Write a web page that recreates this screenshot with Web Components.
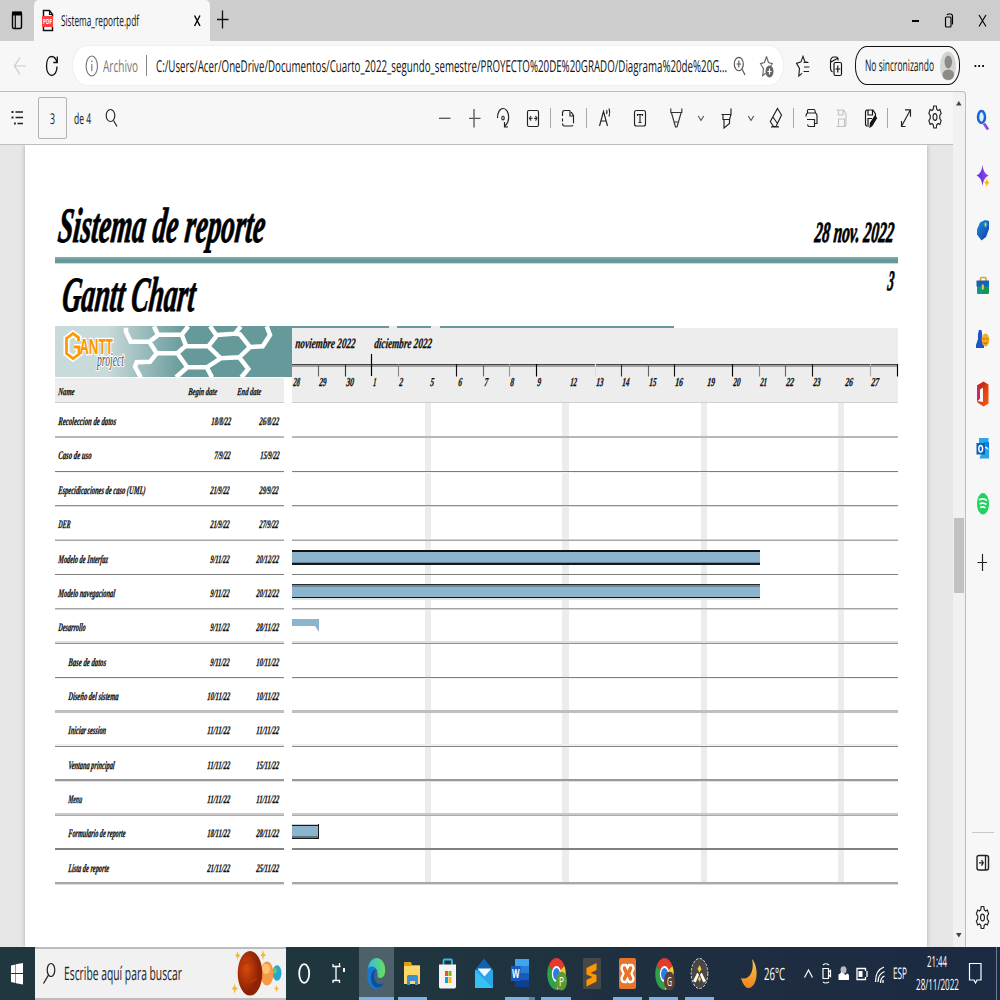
<!DOCTYPE html>
<html lang="es">
<head>
<meta charset="utf-8">
<title>Sistema_reporte.pdf</title>
<style>
html,body{margin:0;height:1000px;overflow:hidden}
body{display:flex;flex-direction:column;width:1000px;background:#f7f7f7;font-family:"Open Sans","Noto Sans",sans-serif}
main{display:flex;height:856px}
section{display:flex;flex-direction:column;width:953px;border-top:1px solid #bdbdbd;box-sizing:border-box}
</style>
</head>
<body>
<tab-strip></tab-strip>
<address-bar></address-bar>
<main>
  <section>
    <pdf-toolbar></pdf-toolbar>
    <pdf-view><gantt-report></gantt-report></pdf-view>
  </section>
  <scroll-rail></scroll-rail>
  <side-rail></side-rail>
</main>
<task-bar></task-bar>
<script>
/* One line of narrow, tall text: "label" set at "size" px and condensed to "w" px.
   "slant" adds an oblique angle, pivoting on the baseline; "k" is the offset of the
   baseline from the middle of the line, in ems. */
class FitText extends HTMLElement{
  connectedCallback(){
    if(this.shadowRoot)return;
    const at=(n,d)=>+(this.getAttribute(n)??d);
    const s=at('size',14),a=at('slant',0),k=at('k',.388),full=at('w',10);
    const w=full-.6*s*Math.tan(a*Math.PI/180),h=Math.round(s*1.4);
    this.attachShadow({mode:'open'}).innerHTML=`<style>:host{display:block;flex:none;width:${full}px;height:${h}px}
      svg{display:block;overflow:visible}
      text{font-size:${s}px;fill:currentColor;stroke:currentColor;stroke-width:var(--weight,0);text-rendering:geometricPrecision}</style>
      <svg width="${full}" height="${h}"><text></text></svg>`;
    const t=this.shadowRoot.querySelector('text');
    t.textContent=this.getAttribute('label');
    const n=t.getComputedTextLength()||w;
    t.setAttribute('transform',`translate(0 ${(h/2+k*s).toFixed(2)}) skewX(${-a}) scale(${(w/n).toFixed(5)} 1)`);
  }
}
customElements.define('fit-text',FitText);

/* Item makers: drawings use window coordinates for their viewBox. */
const I=(x,y,w,h,body,extra='')=>({x,y,w,h,html:m=>`<svg style="${m};${extra}" width="${w}" height="${h}" viewBox="${x} ${y} ${w} ${h}">${body}</svg>`});
const T=(x,base,w,size,text,style='',k=.388,slant=0)=>{
  const h=Math.round(size*1.4);
  return {x,y:base-h/2-k*size,w,h,html:m=>`<fit-text w="${w}" size="${size}" slant="${slant}" k="${k}" label="${text}" style="${m};${style}"></fit-text>`};
};
const S=(x,y,h,c='#a8a8a8')=>({x,y,w:1,h,html:m=>`<i style="${m};width:1px;height:${h}px;background:${c}"></i>`});
const flow=(items,x0,y0)=>{let c=x0;return items.map(i=>{const r=i.html(`margin:${(i.y-y0).toFixed(2)}px 0 0 ${(i.x-c).toFixed(2)}px`);c=i.x+i.w;return r}).join('')};
const flowDown=(items,x0,y0)=>{let c=y0;return items.map(i=>{const r=i.html(`margin:${i.y-c}px 0 0 ${i.x-x0}px`);c=i.y+i.h;return r}).join('')};
const BASE=`svg,i{display:block;flex:none}svg{overflow:visible;fill:none;stroke:#222;stroke-width:1.15}`;
const define=(name,css,html)=>customElements.define(name,class extends HTMLElement{
  connectedCallback(){if(!this.shadowRoot)this.attachShadow({mode:'open'}).innerHTML=`<style>${BASE}${css}</style>${html}`}
});

const gear=(cx,cy)=>`<g transform="translate(${cx} ${cy}) scale(.58 1)"><path vector-effect="non-scaling-stroke" d="M-2.2-11h4.4l.8 3.2 2.3 1.3 3.1-1 2.2 3.8-2.4 2.2v3l2.4 2.2-2.2 3.8-3.1-1-2.3 1.3-.8 3.2h-4.4l-.8-3.2-2.3-1.3-3.1 1-2.2-3.8 2.4-2.2v-3l-2.4-2.2 2.2-3.8 3.1 1 2.3-1.3z"/><circle vector-effect="non-scaling-stroke" r="3.4"/></g>`;

/* ---------- tabs ---------- */
define('tab-strip',`:host{display:flex;height:41px;background:#cdcdcd;align-items:flex-start}
 .tab{display:flex;align-items:flex-start;width:176px;height:41px;background:#f7f7f7;border-radius:5px 5px 0 0;margin-left:11px}`,
 flow([I(11,11,12,18,`<rect x="12.5" y="12.5" width="9" height="16" rx="1.5" stroke="#000" stroke-width="1.4"/><path d="M12 11.500h10v4h-10z" fill="#000" stroke="none"/><path d="M15.300 15v13" stroke="#000"/>`)],0,0)+
 `<div class="tab">`+flow([
  I(41,9,13,23,`<path d="M43.500 16v-5.500h6l3 4V17M43.500 27v3.500h9V27" fill="#fff" stroke="#111" stroke-width="1.500"/><path d="M49.500 10.500v4h3" stroke="#111"/><rect x="42" y="16" width="11" height="11" fill="#fb4141" stroke="none"/><text x="43" y="24.300" font-size="7" textLength="9" lengthAdjust="spacingAndGlyphs" fill="#fff" stroke="none" font-weight="700" font-family="Open Sans">PDF</text>`),
  T(61,26,78,15,'Sistema_reporte.pdf','color:#111'),
  I(193,14,8,13,`<path d="M194.500 15.500l5.500 10.500M200 15.500l-5.500 10.500" stroke="#000" stroke-width="1.400"/>`)],34,0)+`</div>`+
 flow([I(216,10,13,20,`<path d="M217 19.500h11.500M222.500 10.500v18" stroke="#111" stroke-width="1.300"/>`),
  I(911,18,9,6,`<path d="M912 21h7" stroke="#000" stroke-width="2"/>`),
  I(944,13,10,15,`<rect x="945.500" y="17" width="5.500" height="10" rx="1" stroke="#000"/><path d="M947 15q.5-1 2-1h1.500q2 0 2 2.500v8" stroke="#000"/>`),
  I(978,14,9,13,`<path d="M979 15l7 11.500M986 15l-7 11.500" stroke="#000"/>`)],210,0));

/* ---------- address row ---------- */
const star=`<path d="M766.500 56.500l2 6 3.800 1.200-2.600 4.300M766.500 56.500l-2 6-4 1.200 3 5-.8 7 3-2.500"/>`;
define('address-bar',`:host{display:flex;height:50px;align-items:flex-start;background:#f7f7f7}
 .pill{display:flex;align-items:flex-start;width:710px;height:39px;margin:5px 0 0 15px;background:#fff;border-radius:14px/20px;box-shadow:0 0 2px #ddd}
 .me{display:flex;align-items:flex-start;box-sizing:border-box;width:105px;height:39px;margin:5px 0 0 12px;border:1px solid #111;border-width:1.5px 1px;border-radius:12px/18px}`,
 flow([I(13,57,14,18,`<path d="M14.500 66h11.500M20 57.500l-5.500 8.500 5.500 8.500" stroke="#c9c9c9"/>`),
  I(45,55,13,22,`<path d="M57 62.500c-1-4-3-6-5.500-6-3 0-5 4-5 9.500s2.200 9.500 5.200 9.500c3 0 5.300-4 5.300-9M57.300 56.500v6h-4" stroke="#111" stroke-width="1.300"/>`)],0,41)+
 `<div class="pill">`+flow([
  I(85,55,14,22,`<ellipse cx="91.800" cy="66" rx="5.700" ry="10" stroke="#777"/><path d="M91.800 64v7M91.800 60.500v1.800" stroke="#777"/>`),
  T(103,71.800,35,16.500,'Archivo','color:#777'),S(146,55,21,'#888'),
  T(156,71.800,571,16.500,'C:/Users/Acer/OneDrive/Documentos/Cuarto_2022_segundo_semestre/PROYECTO%20DE%20GRADO/Diagrama%20de%20G...','color:#111'),
  I(734,56,12,20,`<ellipse cx="738.800" cy="64" rx="4.500" ry="6.700" stroke="#555"/><path d="M742 69l3 6M736.500 64h4.600M738.800 60.500v7" stroke="#555"/>`),
  I(759,55,15,24,`<g stroke="#666">${star}</g><ellipse cx="769.500" cy="71.500" rx="4" ry="6" fill="#666" stroke="none"/><path d="M767.500 71.500h4M769.500 68.500v6" stroke="#fff"/>`)],73,46)+`</div>`+
 flow([
  I(796,55,14,22,`<path d="M808.500 62.500l-3.500-.6-2-5.500-2 5.500-4.500 1.500 3 5-.7 7.500 3.200-2.500M804 67h5.500M803.500 71.500h5.500M803.500 62.500h5" stroke="#222"/>`),
  I(829,55,14,22,`<rect x="834" y="62.500" width="7.500" height="13" rx="1.500" stroke="#111"/><path d="M837.800 65.500v7M835.500 69h4.800M838 60.500v-2q-.5-1.500-1.500-1.500h-2.500q-3.500 0-3.500 5v6q0 3 2 4M831 62l7-4" stroke="#111"/>`)],783,41)+
 `<div class="me">`+flow([T(865,71.200,69,16,'No sincronizando','color:#111'),
  I(940,52,16,29,`<g stroke="none"><ellipse cx="948" cy="66" rx="8" ry="14.500" fill="#d5d4d0"/><ellipse cx="948.300" cy="62" rx="3.800" ry="6.500" fill="#8e8a85"/><ellipse cx="948.300" cy="74.800" rx="5.800" ry="5.300" fill="#8e8a85"/></g>`)],856,47)+`</div>`+
 flow([I(973,64,12,4,`<path d="M974.500 66h1.800M978.300 66h1.800M982.200 66h1.800" stroke="#111" stroke-width="2"/>`)],960,41));

/* ---------- PDF toolbar ---------- */
const chev=x=>I(x,115,6,7,`<path d="M${x+.3} 116l2.700 4.500 2.700-4.500" stroke="#555"/>`);
define('pdf-toolbar',`:host{display:flex;align-items:flex-start;flex:none;height:53px;box-sizing:border-box;background:#f7f7f7;border-bottom:1px solid #bdbdbd}
 .box{display:flex;align-items:flex-start;box-sizing:border-box;width:29px;height:42px;margin:5px 0 0 14px;border:1px solid #b3b3b3;border-radius:2px}`,
 flow([I(11,109,13,17,`<path d="M15.500 112h7.500M15.500 117.500h7.500M17.500 123.500h5.500" stroke="#222" stroke-width="1.400"/><path d="M11.500 112h2M11.500 117.500h2M14 123.500h1.800" stroke="#222" stroke-width="1.800"/>`)],0,92)+
 `<div class="box">`+flow([T(49.800,124.5,5,15,'3','color:#111')],39,98)+`</div>`+
 flow([T(74,124.5,17,15,'de 4','color:#111'),
 I(105,108,13,20,`<ellipse cx="110.500" cy="115.500" rx="4.300" ry="6"/><path d="M113.500 120.500l3.500 6"/>`),
 I(438,116,13,4,`<path d="M439 118.300h11.500" stroke="#555" stroke-width="1.300"/>`),
 I(468,108,13,20,`<path d="M469 118.300h11.500M474 109v18.500" stroke="#555" stroke-width="1.300"/>`),
 I(496,107,14,21,`<path d="M497.500 118c0-5 2-9.500 5.500-9.500s5.700 4 5.700 9c0 4-1.700 6.500-3.500 8.500M504.500 122v5h3.500"/><ellipse cx="503" cy="118" rx="1.200" ry="2"/>`),
 I(527,109,12,19,`<rect x="527.500" y="110.500" width="11" height="16" rx="1.500"/><path d="M529.500 118.300h3M534 118.300h3M531 116l-1.500 2.300 1.500 2.300M535.500 116l1.500 2.300-1.500 2.300" stroke="#333"/>`),
 S(550,108,20),
 I(561,109,14,18,`<path d="M562.500 116v-3q0-2.500 2-2.500h5.500l3.500 5v8.500q0 2-2 2h-7q-2 0-2-2.500v-5M570 110.500v5.500h3.500" stroke-dasharray="12 2"/>`),
 S(586,108,20),
 I(599,108,12,19,`<path d="M599.500 126l4-14.500 4 14.500M601 121h5M606.500 110q1 1.500 0 4M609 108.500q1.500 4 0 8" stroke="#222"/>`),
 I(634,110,12,17,`<rect x="634.500" y="110.500" width="11" height="15.500" rx="2"/><path d="M637.500 116v-1.500h5V116M640 114.500v8M638.500 122.500h3"/>`),
 I(670,107,13,21,`<path d="M670.800 108.500v4h11v-4M671.500 113l4 14h1.500l4-14M674.300 122h4" stroke="#333"/>`),chev(698),
 I(721,108,11,21,`<path d="M721.500 114.500h9M723 114.500v5h6.500M731 108.500v6l-1.500 5v4l-5.500 4.500v-8" stroke="#222"/>`),chev(748),
 I(769,107,14,21,`<path d="M777.500 108.500l4 6.500-5.500 11.500h-2.500l-3.200-5zM772.500 116.500l5 7M771 126.800h8"/>`),
 S(793,108,20),
 I(805,108,13,20,`<path d="M807.500 113v-2.500q0-1 1-1h5.500q1 0 1.500 3.500M806 116.500q0-3.500 2-3.500h7q2 0 2 3v7.500h-2M807 119.500h7.500v7h-5.500q-1 0-1.500-2"/>`),
 I(835,108,12,20,`<path d="M836.500 110h7l2.500 4v10q0 2.500-2 2.500h-7.500M838.500 110v5h4.500v-5M838.500 126v-7h6v7" stroke="#c4c4c4"/>`),
 I(865,108,12,20,`<path d="M869 126h-2q-1.500 0-1.500-2.500v-11q0-2.500 1.500-2.500h6l2.500 4v2M868 110v5h4.500v-5M868 125v-6.500h4" stroke="#111"/><path d="M870 127l.5-4 4.500-7 1.500 2-4.500 7.500z" fill="#111" stroke="#111"/>`),
 S(887,108,20),
 I(900,108,12,20,`<path d="M905 109.800h5.500v7M910.500 109.800l-9 16.500M901.500 121v5.500h4" stroke="#222"/>`),
 I(928,105,14,24,gear(935,117))],67,92));

/* ---------- page surface ---------- */
define('pdf-view',`:host{display:flex;flex:1;background:#e6e6e6;overflow:hidden}
 .page{display:flex;flex-direction:column;width:902px;margin-left:25px;background:#fff;box-shadow:0 0 4px #aaa}`,`<div class="page"><slot></slot></div>`);

/* ---------- gantt report ---------- */
const tx=(x,b,w,s,t,st='color:#0c0c0c;--weight:.25px')=>T(x,b,w,s,t,st,.3375,6);
const BIG='color:#000;--weight:.9px';
const rows=[
 [58,58.5,'Recoleccion de datos',210.5,20.5,'18/8/22',259,20.5,'26/8/22',436,['#b8b8b8','#b8b8b8','#fff']],
 [58,34,'Caso de uso',214,17,'7/9/22',260,20,'15/9/22',471,['#7d7d7d','#f4f4f4','#fff']],
 [58,88,'Especidicaciones de caso (UML)',210,20,'21/9/22',259,20,'29/9/22',505,['#8f8f8f','#dcdcdc','#fff']],
 [58,13,'DER',210,20,'21/9/22',259,20,'27/9/22',539,['#d2d2d2','#a6a6a6','#fff']],
 [58,50.5,'Modelo de Interfaz',210,20,'9/11/22',255.500,23.5,'20/12/22',574,['#7d7d7d','#fff','#fff']],
 [58,57.5,'Modelo navegacional',210,20,'9/11/22',255.500,23.5,'20/12/22',608,['#a6a6a6','#d2d2d2','#fff']],
 [58,28,'Desarrollo',210,20,'9/11/22',255.500,23.5,'28/11/22',641,['#dedede','#dedede','#929292']],
 [67.500,38.5,'Base de datos',210,20,'9/11/22',256,23.5,'10/11/22',677,['#828282','#eee','#fff']],
 [67.500,51,'Diseño del sistema',207,23.5,'10/11/22',256,23.5,'10/11/22',710,['#bfbfbf','#bfbfbf','#bfbfbf']],
 [67.500,38.5,'Iniciar session',207,23.5,'11/11/22',256,23.5,'11/11/22',744,['#eee','#eee','#868686']],
 [67.500,47,'Ventana principal',207,23.5,'11/11/22',256,23.5,'15/11/22',779,['#999','#999','#e2e2e2']],
 [67.500,14.5,'Menu',207,23.5,'11/11/22',256,23.5,'11/11/22',813,['#cacaca','#cacaca','#aaa']],
 [67.500,58,'Formulario de reporte',207,23.5,'18/11/22',255.500,23.5,'28/11/22',848,['#818181','#818181','#fff']],
 [67.500,41.5,'Lista de reporte',206.500,23.5,'21/11/22',255.500,23.5,'25/11/22',882,['#a8a8a8','#a8a8a8','#dcdcdc']]];
const bars={
 4:[550,`<div style="width:468px;height:15px;background:linear-gradient(#101416 2px,#8cb4cd 2px 12px,#6c8798 12px 13px,#15191c 13px)"></div>`],
 5:[584,`<div style="width:468px;height:16px;background:linear-gradient(#252d32 1px,#6d8899 1px 3px,#8cb4cd 3px 13px,#101416 13px 14px,#dfe0d6 14px)"></div>`],
 6:[619,`<svg width="27" height="13" viewBox="0 0 27 13"><path d="M0 0h27v13l-4-6H0z" fill="#8cb4cd" stroke="none"/></svg>`],
 12:[824,`<div style="box-sizing:border-box;width:27px;height:15px;background:linear-gradient(#ccc 1px,#15191c 1px 2px,#8cb4cd 2px 12px,#5c7482 12px 14px,#15191c 14px);border-right:1px solid #15191c"></div>`]};
let top0=403,left='',right='';
rows.forEach((r,n)=>{
  const end=r[9]+3,h=end-top0,b=425+34.35*n,c=r[10];
  const g=`background:linear-gradient(${c[0]} 1px,${c[1]} 1px 2px,${c[2]} 2px) bottom/100% 3px no-repeat;height:${h}px`;
  left+=`<div class="row" style="${g}">`+flow([tx(r[0],b,r[1],11.5,r[2]),tx(r[3],b,r[4],11.5,r[5]),tx(r[6],b,r[7],11.5,r[8])],55,top0)+`</div>`;
  right+=`<div class="row" style="${g.replaceAll('#fff','transparent')}">${bars[n]?`<div style="padding-top:${bars[n][0]-top0}px">${bars[n][1]}</div>`:''}</div>`;
  top0=end;
});
const days=[[293,7.5,28],[319,8,29],[345.500,8.5,30],[372.500,3.8,1],[399,4.500,2],[430.500,4.500,5],[458,4.500,6],[484,4.500,7],[510.500,4.500,8],[537,4.500,9],[570,7.500,12],[596,8,13],[622.500,8,14],[649,8,15],[675.500,8.500,16],[707,8.500,19],[733.500,8,20],[760.500,7.500,21],[786.500,8.500,22],[813,8,23],[845,8.500,26],[871.500,8.500,27]];
const ticks=[[318,'#666'],[345,'#333'],[398,'#888'],[456,'#111'],[483,'#666'],[509,'#999'],[536,'#000'],[595,'#ddd'],[621,'#333'],[648,'#666'],[674,'#111'],[732,'#000'],[759,'#888'],[785,'#666'],[812,'#111'],[870,'#aaa'],[897,'#000']];
const P=(...a)=>'M'+a.map(p=>(40+p[0]/3).toFixed(1)+' '+(195+p[1]/3).toFixed(1)).join('L');
const comb=[P([258,398],[258,410],[272,440],[328,440],[354,420],[342,394]),P([328,440],[350,475],[412,475],[438,452],[425,419],[354,419]),P([425,419],[445,394]),P([438,454],[505,454],[530,422],[510,394]),P([530,420],[585,416],[602,394]),P([505,454],[542,490],[598,487],[630,456],[600,418],[585,416]),P([630,456],[668,454],[690,420],[680,394]),P([350,475],[330,500],[290,502],[285,515],[302,547]),P([412,475],[442,517],[408,547]),P([442,517],[500,517],[542,490]),P([500,517],[516,547]),P([598,487],[625,522],[604,547])].join('');
const hexG='M78.500 341v-3.500l-5.500-4-6.500 5v15l6.500 5 6-4.500v-7h-5';
define('gantt-report',`:host{display:block;font:italic 700 12px "Liberation Serif","Times New Roman",serif;padding:0 29px 0 30px}
 .r{display:flex;align-items:flex-start}
 .bar{height:6px;background:linear-gradient(#78a8a8 2px,#669999 2px);border-bottom:1px solid #c9dcdc;}
 .cols{display:flex;align-items:flex-start}
 .names{width:237px}.chart{width:606px;background:#ededed}
 .nh{display:flex;align-items:flex-start;width:229px;height:25px;background:#ededed;border-bottom:1px solid #cfcfcf;box-sizing:border-box;margin-top:1px}
 .names .row{display:flex;align-items:flex-start;width:229px}
 .grid{background:#fff linear-gradient(90deg,transparent 133px,#ececec 133px 139px,transparent 139px 270px,#ececec 270px 277px,transparent 277px 409px,#ececec 409px 415px,transparent 415px 546px,#ececec 546px 552px,transparent 552px)}
 .row{box-sizing:border-box;overflow:hidden}.names .row{overflow:visible}
 .strip{width:619px;height:2px;background:linear-gradient(90deg,#669999 334px,#e6f0f0 334px 342px,#669999 342px 376px,#e6f0f0 376px 385px,#669999 385px)}
 .head{height:75px;box-sizing:border-box;border-bottom:1px solid #cfcfcf}`,
 `<div class="r" style="height:112px">`+flow([tx(57,242,210,49.5,'Sistema de reporte',BIG),tx(814,242,81,29,'28 nov. 2022',BIG)],55,145)+`</div>
 <div class="bar"></div>
 <div class="r" style="height:62px">`+flow([tx(61,311.500,136,49,'Gantt Chart',BIG),tx(887,290.300,8,28,'3',BIG)],55,264)+`</div>
 <div class="strip"></div>
 <div class="cols"><div class="names">
 <svg width="237" height="49" viewBox="55 328 237 49"><defs><linearGradient id="b"><stop offset=".22" stop-color="#c9dada"/><stop offset=".55" stop-color="#669999"/></linearGradient><clipPath id="c"><path d="M55 326h237v51H55z"/></clipPath></defs>
 <g clip-path="url(#c)"><path d="M55 326h237v51H55z" fill="url(#b)" stroke="none"/><path d="${comb}" stroke="#fff" stroke-width="4.500"/>
 <path d="${hexG}" stroke="#fff" stroke-width="6"/>
 <text x="80" y="354" font-family="Open Sans" font-style="normal" font-weight="700" font-size="21.500" textLength="33" lengthAdjust="spacingAndGlyphs" fill="#ff9900" stroke="#fff" stroke-width="2.500" paint-order="stroke">ANTT</text>
 <path d="${hexG}" stroke="#ff9900" stroke-width="2.800"/>
 <text x="97" y="365.500" font-family="Liberation Serif" font-weight="400" font-size="19" textLength="27" lengthAdjust="spacingAndGlyphs" fill="#555" stroke="#fff" stroke-width="2.500" paint-order="stroke">project</text></g></svg>
 <div class="nh">`+flow([tx(58,395.300,17,10.5,'Name'),tx(188,395.300,29.500,10.5,'Begin date'),tx(237,395.300,24.500,10.5,'End date')],55,378)+`</div>${left}</div>
 <div class="chart"><div class="head"><div class="r" style="height:36px">`+flow([tx(295,347.800,61,14.2,'noviembre 2022'),tx(374,347.800,58.500,14.2,'diciembre 2022')],292,328)+`</div>
 <svg width="606" height="12" viewBox="292 364 606 12"><path d="M292 364.500h606" stroke="#444" stroke-width="1"/><path d="M292 366h606" stroke="#a0a3a0" stroke-width="2"/><path d="M371.500 354v22" stroke="#000" stroke-width="1.200"/>${ticks.map(t=>`<path d="M${t[0]+.5} 364v12.500" stroke="${t[1]}"/>`).join('')}</svg>
 <div class="r">`+flow(days.map(d=>tx(d[0],386,d[1],12.2,d[2])),292,376)+`</div></div><div class="grid">${right}</div></div></div>`);

/* ---------- scrollbar ---------- */
define('scroll-rail',`:host{display:flex;flex-direction:column;flex:none;width:13px;box-sizing:border-box;border-top:1px solid #bdbdbd;border-right:1px solid #bdbdbd;background:#f1f1f1;border-radius:0 4px 0 0}
 .thumb{width:10px;height:75px;background:#c1c1c1}`,
 flowDown([I(956,101,6,5,`<path d="M956 105.500l2.800-4.500 2.800 4.500z" fill="#444" stroke="none"/>`),{x:954,y:518,w:10,h:75,html:m=>`<div class="thumb" style="${m}"></div>`},I(956,933,6,5,`<path d="M956 933l2.800 4.500 2.800-4.500z" fill="#444" stroke="none"/>`)],953,92));

/* ---------- sidebar ---------- */
define('side-rail',`:host{display:flex;flex-direction:column;flex:1;background:#f7f7f7}svg{stroke:none}.k{stroke:#222}`,
 `<svg width="0" height="0"><defs><linearGradient id="o" x2="1" y2="1"><stop stop-color="#a51219"/><stop offset=".6" stop-color="#e8450d"/><stop offset="1" stop-color="#f05a10"/></linearGradient><linearGradient id="t" x2="1" y2="1"><stop stop-color="#1a90d8"/><stop offset="1" stop-color="#133da8"/></linearGradient></defs></svg>`+
 flowDown([
 I(976,109,14,22,`<ellipse cx="981.500" cy="117" rx="3.500" ry="6" fill="#dceefc" stroke="#1767d8" stroke-width="2.500"/><path d="M984 123.500l4 6" stroke="#8a48e8" stroke-width="2.800"/>`),
 I(976,164,14,23,`<path d="M982.500 165q1 9 6 10.500-5 2-6 10.500-1-9-6-10.500 5-2 6-10.500" fill="#8e38e8"/><path d="M977 175.500q4.500-1 5.500-8v17q-1-7-5.500-9" fill="#5a40e0"/><path d="M986.800 178q.5 4 3 4.700-2.500.8-3 4.500-.5-4-3-4.700 2.500-.5 3-4.500" fill="#ffb715"/>`),
 I(976,218,14,23,`<path d="M980 222.500l5-2.500 4 1v8l-3 8-4.500 3.500-4.500-6v-5z" fill="url(#t)"/><ellipse cx="985.500" cy="224.500" rx="1.500" ry="2.500" fill="#ffc83a" stroke="#168ad0"/>`),
 I(976,276,14,19,`<path d="M980.500 282v-3.500q0-1 1-1h3.500q1 0 1 1v3.500" stroke="#e0a020" stroke-width="1.600"/><path d="M977 281h12v12q0 1-1 1h-10q-1 0-1-1z" fill="#0a9a8c"/><path d="M976.500 280.500h12.500v6h-12.500z" fill="#1263b8"/><path d="M983 287h6v6h-6z" fill="#149650"/><path d="M981.800 284.500h2v5h-2z" fill="#ffc83a"/>`),
 I(976,329,14,20,`<path d="M979 330h2.500q1 4 .5 8l2 7v3h-8v-3l2-6q-.8-5 1-9" fill="#1b55c8"/><ellipse cx="985.500" cy="340" rx="3.800" ry="6.500" fill="#f5ab1a"/><path d="M984 338v1.500M987 338v1.500M983.500 342.500q2 2.500 4 0" stroke="#9a5200" stroke-width="1"/>`),
 I(976,381,14,26,`<path fill-rule="evenodd" d="M983.500 381.500l5 3v19l-5 3-6-4v-1.500l5.500 1v-14.500l-3 2v9l-3 3v-16z" fill="url(#o)"/><path d="M977 385.500l3-1.500v14.500l-3 3z" fill="#c92a5c"/>`),
 I(976,438,14,21,`<path d="M979 438h9.500v9h-9.500z" fill="#27a8ea"/><path d="M984 442h5v16h-9l9-8z" fill="#0f78d4"/><path d="M983.500 447l5.500 3v8.500h-9.500z" fill="#2aa4e4"/><path d="M976.500 443h8.500v11.500h-8.500z" fill="#0a61bb"/><ellipse cx="980.700" cy="448.800" rx="1.900" ry="3.300" stroke="#fff" stroke-width="1.400"/>`),
 I(976,493,14,22,`<ellipse cx="983" cy="503.800" rx="6" ry="10.700" fill="#1ed35f"/><path d="M979 500q4-2.500 8 .5M979.500 504q3.500-2 7 .5M980 507.500q3-1.500 5.500.5" stroke="#fff" stroke-width="1.600"/>`),
 I(977,553,12,19,`<path class="k" d="M977.500 562.500h9.500M982.500 554v17"/>`),
 {x:972,y:832,w:22,h:1,html:m=>`<i style="${m};width:22px;height:1px;background:#c8c8c8"></i>`},
 I(976,854,14,17,`<rect class="k" x="977" y="855.500" width="11.500" height="14.500" rx="2" stroke-width="1.400"/><path class="k" d="M985.500 856v14M979 862.800h4M981.500 860l1.700 2.800-1.700 2.800" stroke-width="1.300"/>`),
 I(976,905,14,25,`<g class="k">${gear(982.500,917.500)}</g>`)],966,91));

/* ---------- taskbar ---------- */
const chrome=(x,l,c)=>I(x-10,957,20,35,`<g stroke="none"><g transform="translate(${x-.5} 974) scale(.58 1)"><path d="M0 0L-13.800-8A16 16 0 0 1 13.800-8z" fill="#e53a2e"/><path d="M0 0L13.800-8A16 16 0 0 1 0 16z" fill="#fcc934"/><path d="M0 0L0 16A16 16 0 0 1-13.800-8z" fill="#2da14c"/><circle r="8" fill="#fff"/><circle r="6" fill="#2a7de9"/></g><ellipse cx="${x+4.500}" cy="981" rx="5.500" ry="9.500" fill="${c}"/><text x="${x+2}" y="986" font-size="13" textLength="5" lengthAdjust="spacingAndGlyphs" fill="#fff" font-family="Open Sans">${l}</text></g>`);
const app=(x,w,items,o={})=>({x,y:947,w,html:m=>`<div class="app" style="${m};width:${w}px;background:${o.bg||'none'};box-shadow:${o.line?'inset 0 -3px #76b5ec':'none'}">`+flow(items,x,947)+`</div>`});
define('task-bar',`:host{display:flex;align-items:flex-start;height:53px;background:linear-gradient(90deg,#21373f 0,#20363f 40%,#1e2d40 75%,#1a2a42)}svg{stroke:none}.w{stroke:#fff}
 .app{display:flex;align-items:flex-start;height:53px;flex:none}
 .find{display:flex;align-items:flex-start;width:251px;height:53px;box-sizing:border-box;background:#f1f1f1;border:solid #bcbcbc;border-width:2px 0;margin-left:11px}
 .clock{display:flex;flex-direction:column;width:44px;margin-left:9px;color:#fff}`,
 flow([I(11,962,13,23,`<path d="M11 965.500l4.500-1V973H11zM16 964.300l7-1.300v10h-7zM11 974h4.500v9l-4.500-1zM16 974h7v10.500l-7-1.200z" fill="#fff"/>`)],0,947)+
 `<div class="find">`+flow([
 I(43,962,13,22,`<ellipse cx="51" cy="970" rx="3.800" ry="6.500" stroke="#222" stroke-width="1.200"/><path d="M48.500 975l-5 8.500" stroke="#222" stroke-width="1.300"/>`),
 T(64,980.600,118,18.5,'Escribe aquí para buscar','color:#222'),
 I(232,950,50,46,`<defs><radialGradient id="m" cx=".35" cy=".4"><stop stop-color="#d84a0c"/><stop offset="1" stop-color="#8e2204"/></radialGradient></defs><ellipse cx="277" cy="973" rx="4.500" ry="7.800" fill="#2aa6c8"/><path d="M275 967q3 2 1 6-2 2-3-1z" fill="#55d080"/><ellipse cx="267" cy="973.500" rx="6.500" ry="12" fill="#f79a48"/><ellipse cx="266" cy="969" rx="4" ry="5" fill="#ffc070"/><ellipse cx="250" cy="973.300" rx="12.300" ry="22.300" fill="url(#m)"/><path d="M242 965q6-7 12 2M243 980q8 5 14-2" stroke="#b33507" stroke-width="1.500"/><path d="M237.500 951l1 3 2 1.500-2 1.500-1 3-.8-3-1.700-1.500 1.700-1.500zM263 950l1 3.500 2 1.500-2 1.500-1 3.500-.8-3.500-1.700-1.500 1.700-1.500zM234.500 983l1 4 2.500 1.500-2.500 1.500-1 4-.8-4-2-1.500 2-1.500zM276.500 985l.8 2.500 2 1-2 1-.8 2.500-.8-2.500-1.500-1 1.500-1z" fill="#efb942"/>`)],35,949)+`</div>`+
 flow([
 I(298,962,13,23,`<ellipse cx="304.200" cy="973.500" rx="5" ry="9.300" stroke="#fff" stroke-width="1.800"/>`),
 I(332,962,14,22,`<path class="w" d="M333 964v2.500h7.500M339.500 963v3.500M333 983v-2.500h6.500v2.500M336 966.500v14" stroke-width="1.300"/><path d="M343 968h2v4h-2z" fill="#fff"/>`),
 app(359,35,[I(367,957,19,32,`<defs><linearGradient id="e"><stop stop-color="#31b9e8"/><stop offset="1" stop-color="#6be055"/></linearGradient></defs><path d="M368 970c0-7 4-12 8.500-12 5 0 8.700 5 8.700 12 0 5-2 8-5 8-2 0-3-1-2.500-3 0-5-2-8-5-8-2 0-4 1-4.700 3" fill="url(#e)"/><path d="M368 969c2-4 8-3 9 3-3 0-4 6-1 10 2 3 6 3 8 0-1 4-4 7-8 7-5 0-9-6-9-14 0-2 .3-4 1-6" fill="#1877cf"/><path d="M371 978c0-6 3-9 6-8-3 1-4 7-1 12 2 3 6 3 8 0-2 8-13 8-13-4" fill="#0d4f9e"/>`)],{bg:'#4d616b',line:1}),
 app(398,29,[I(404,961,17,25,`<path d="M404 962h7l1 3h8v19h-16z" fill="#d9a11a"/><path d="M404 966h16v18h-16z" fill="#ffd768"/><path d="M407 985v-8q0-2 1.500-2h8q1.500 0 1.500 2v8h-3v-4h-5v4z" fill="#3f8fd0"/>`)],{line:1}),
 I(439,958,18,31,`<path d="M443.500 965v-4q0-1.500 1-1.500h6.500q1 0 1 1.500v4" stroke="#38b6ee" stroke-width="1.800"/><path d="M439 964.500h17v22q0 2-1.500 2h-14q-1.500 0-1.500-2z" fill="#f4f4f4"/><path d="M445 971h3v5h-3z" fill="#f25022"/><path d="M448.500 971h3v5h-3z" fill="#7fba00"/><path d="M445 977h3v6h-3z" fill="#00a4ef"/><path d="M448.500 977h3v6h-3z" fill="#ffb900"/>`),
 I(475,958,18,30,`<path d="M475 970l9-11.500 9 11.500z" fill="#0e63b5"/><path d="M475 970h18v18h-18z" fill="#2aa5ea"/><path d="M475 970.500l18 17.500h-18z" fill="#38c0f5"/><path d="M477.500 968.500h14l-7 8z" fill="#f6f6f6"/>`),
 app(505,24,[I(511,958,18,30,`<path d="M515 959h14v7h-14z" fill="#41a5ee"/><path d="M515 966h14v7h-14z" fill="#2b7cd3"/><path d="M515 973h14v7h-14z" fill="#185abd"/><path d="M515 980h14v7h-14z" fill="#103f91"/><path d="M511 966h9.500v15h-9.500z" fill="#185abd"/><text x="512" y="977.500" font-size="12" font-weight="700" textLength="7.500" lengthAdjust="spacingAndGlyphs" fill="#fff" font-family="Open Sans">W</text>`)],{line:1}),
 {x:529,y:997,w:6,html:m=>`<i style="${m};width:6px;height:3px;background:#5485b0"></i>`},
 app(541,30,[chrome(556.500,'P','#5c9a35')],{line:1}),
 I(583,957,18,32,`<rect x="583" y="958" width="18" height="31" rx="1" fill="#484848"/><path d="M596.500 963v7l-6 3 6 2v6.500l-10 5v-6.500l6-3-6-2.500v-6.500z" fill="#ff9800"/>`),
 app(613,29,[I(619,957,17,32,`<rect x="619" y="958" width="17" height="31" rx="2" fill="#e8732a"/><path d="M624 965h2l1.500 3 1.500-3h2q2.500 0 2.500 4l-2 4.500 2 4.500q0 4-2.500 4h-2l-1.500-3-1.500 3h-2q-2.500 0-2.500-4l2-4.500-2-4.500q0-4 2.500-4z" stroke="#fff" stroke-width="2.300"/>`)],{line:1}),
 app(649,29,[chrome(664.500,'G','#5b4037')],{line:1}),
 app(685,29,[I(691,957,18,32,`<ellipse cx="699.500" cy="973.500" rx="8.300" ry="15" fill="#474745" stroke="#ddd" stroke-width="1" stroke-dasharray="2.500 1.500"/><path d="M693.500 981l4-8 1 2-3 7zM705.500 981l-4-8-1 2 3 7z" fill="#fff" stroke="#fff" stroke-width=".8"/><path d="M699.500 965l2 4-2 3.500-2-3.500zM699.500 976l1.500 3-1.500 3-1.500-3z" fill="#ffc72e"/>`)],{line:1}),
 I(740,958,18,31,`<defs><linearGradient id="n" y2="1" x2="0"><stop stop-color="#f7cb50"/><stop offset="1" stop-color="#f08418"/></linearGradient></defs><path d="M752 959c7 8 6 27-3 29-3 .5-6-3-8-10 8 3 14-7 11-19" fill="url(#n)"/>`),
 T(764,980,21,17,'26°C','color:#fff'),
 I(803,968,11,11,`<path class="w" d="M804.500 977.500l4-7.500 4 7.500" stroke-width="1.200"/>`),
 I(821,962,10,22,`<path class="w" d="M823 968.500h5.500v10h-5.500zM828.500 972l2-1.500v6l-2-1.500M823 965q2.500-2.500 6 0M823 982q2.500 2 6 0" stroke-width="1.200"/>`),
 I(838,965,12,16,`<ellipse cx="843.500" cy="970" rx="3" ry="3.700" fill="#b5bac4"/><path d="M838.500 980v-5q0-1 1-1l2-2 4 3 1.500-1.500q2 0 2 3v3.500z" fill="#fff"/>`),
 I(856,967,12,14,`<path class="w" d="M865.500 971v-2.500h-8.500v11h8.500v-2.500M867 971v6" stroke-width="1.300"/><path d="M858.500 971h4v6h-4z" fill="#fff"/>`),
 I(874,966,12,18,`<path class="w" d="M875.500 982q0-12 8.500-15M878 982q0-8 6.500-10.500M880.500 983q0-5.500 4-7M883 983v-3" stroke-width="1.300"/>`),
 T(893,979,14,16,'ESP','color:#fff')],286,947)+
 `<div class="clock"><fit-text w="20" size="15.500" label="21:44" style="margin:2.500px 0 0 11px"></fit-text><fit-text w="43" size="15.500" label="28/11/2022" style="margin-top:1.500px"></fit-text></div>`+
 flow([I(968,962,14,23,`<path class="w" d="M969.500 963.500h11.500v16.500h-4l-1.500 3-1.500-3h-4.500z" stroke-width="1.200"/>`),S(996,947,53,'#6f7c8a')],960,947));
</script>
</body>
</html>
